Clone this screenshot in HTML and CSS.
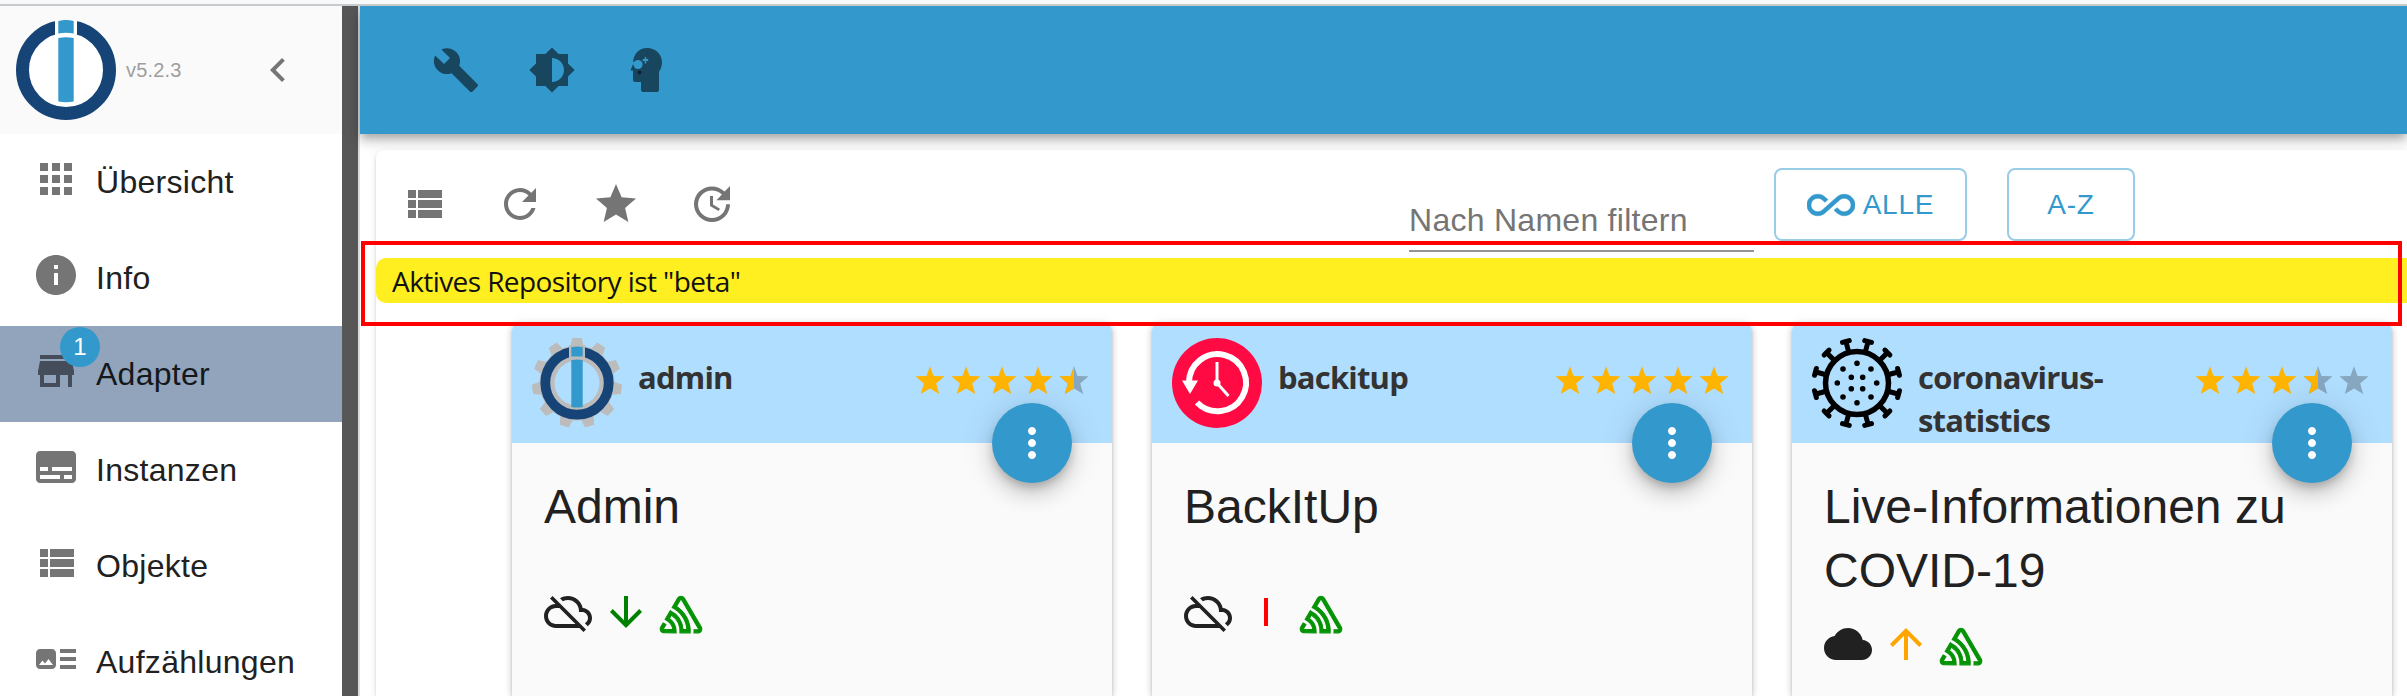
FILE: index.html
```html
<!DOCTYPE html>
<html lang="de"><head><meta charset="utf-8"><title>ioBroker Admin</title>
<link rel="stylesheet" href="styles.css"></head>
<body>
<svg class="defs" xmlns="http://www.w3.org/2000/svg">
<symbol id="star" viewBox="0 0 36 36"><path d="M18 4.200L21.500 13.900 32.500 14.300 24.200 21.500 27.200 32 18 26.600 8.800 32 11.800 21.500 3.500 14.300 14.500 13.900z"/></symbol>
<symbol id="dots" viewBox="0 0 24 24"><path d="M12 8c1.100 0 2-.9 2-2s-.9-2-2-2-2 .9-2 2 .9 2 2 2zm0 2c-1.100 0-2 .9-2 2s.9 2 2 2 2-.9 2-2-.9-2-2-2zm0 6c-1.100 0-2 .9-2 2s.9 2 2 2 2-.9 2-2-.9-2-2-2z"/></symbol>
<symbol id="cloudoff" viewBox="0 0 24 24"><path d="M19.350 10.040C18.670 6.590 15.640 4 12 4c-1.480 0-2.850.430-4.010 1.170l1.460 1.460C10.210 6.230 11.080 6 12 6c3.040 0 5.500 2.460 5.500 5.500v.5H19c1.660 0 3 1.340 3 3 0 1.130-.640 2.110-1.560 2.620l1.450 1.450C23.160 18.160 24 16.680 24 15c0-2.640-2.050-4.780-4.650-4.960zM3 5.270l2.750 2.740C2.560 8.150 0 10.770 0 14c0 3.310 2.690 6 6 6h11.730l2 2L21 20.730 4.270 4 3 5.270zM7.730 10l8 8H6c-2.210 0-4-1.790-4-4s1.790-4 4-4h1.730z"/></symbol>
<symbol id="sentry" viewBox="0 0 72 66"><path d="M29,2.260a4.670,4.670,0,0,0-8,0L14.420,13.530A32.210,32.210,0,0,1,32.170,40.190H27.550A27.680,27.680,0,0,0,12.090,17.470L6,28a15.920,15.920,0,0,1,9.230,12.170H4.620A.76.76,0,0,1,4,39.060l2.940-5a10.740,10.740,0,0,0-3.360-1.900l-2.910,5a4.540,4.540,0,0,0,1.690,6.240A4.660,4.660,0,0,0,4.620,44H19.150a19.400,19.400,0,0,0-8-17.310l2.310-4A23.870,23.870,0,0,1,23.760,44H36.070a35.880,35.880,0,0,0-16.410-31.800l4.670-8a.77.77,0,0,1,1.050-.27c.53.290,20.290,34.770,20.660,35.170a.76.76,0,0,1-.68,1.130H40.600q.09,1.910,0,3.810h4.780A4.590,4.590,0,0,0,50,39.430a4.490,4.490,0,0,0-.62-2.280Z" transform="translate(11 11)"/></symbol>
</svg>
<div class="strip"></div>
<div class="app">
<aside class="side">
 <div class="brand">
  <svg class="logo" viewBox="0 0 100 100"><circle cx="50" cy="50" r="50" fill="#fff"/><circle cx="50" cy="50" r="43.500" fill="none" stroke="#164477" stroke-width="13"/><path fill="#fff" d="M39 0h22v20H39zM42 80h16v6H42z"/><path fill="#39c" d="M42.300 1q7.700-2 15.400 0v12.500q-7.700-1.500-15.400 0zM42.300 18q7.700-1.500 15.400 0v63.500q-7.700 1.500-15.400 0z"/></svg>
  <span class="ver">v5.2.3</span>
  <svg class="i chev" viewBox="0 0 24 24"><path d="M15.410 7.410L14 6l-6 6 6 6 1.410-1.410L10.830 12z"/></svg>
 </div>
 <nav>
 <a class="row"><svg class="i" viewBox="0 0 24 24"><path d="M4 8h4V4H4zm6 12h4v-4h-4zm-6 0h4v-4H4zm0-6h4v-4H4zm6 0h4v-4h-4zm6-10v4h4V4zm-6 4h4V4h-4zm6 6h4v-4h-4zm0 6h4v-4h-4z"/></svg><span>Übersicht</span></a>
 <a class="row"><svg class="i" viewBox="0 0 24 24"><path d="M12 2C6.480 2 2 6.480 2 12s4.480 10 10 10 10-4.480 10-10S17.520 2 12 2zm1 15h-2v-6h2v6zm0-8h-2V7h2v2z"/></svg><span>Info</span></a>
 <a class="row active"><svg class="i" viewBox="0 0 24 24"><path d="M20 4H4v2h16V4zm1 10v-2l-1-5H4l-1 5v2h1v6h10v-6h4v6h2v-6h1zm-9 4H6v-4h6v4z"/></svg><b class="badge">1</b><span>Adapter</span></a>
 <a class="row"><svg class="i" viewBox="0 0 24 24"><path d="M20 4H4c-1.100 0-2 .9-2 2v12c0 1.100.9 2 2 2h16c1.100 0 2-.9 2-2V6c0-1.100-.9-2-2-2zM4 12h4v2H4v-2zm10 6H4v-2h10v2zm6 0h-4v-2h4v2zm0-4H10v-2h10v2z"/></svg><span>Instanzen</span></a>
 <a class="row"><svg class="i" viewBox="0 0 24 24"><path d="M4 14h4v-4H4v4zm0 5h4v-4H4v4zM4 9h4V5H4v4zm5 5h12v-4H9v4zm0 5h12v-4H9v4zM9 5v4h12V5H9z"/></svg><span>Objekte</span></a>
 <a class="row"><svg class="i" viewBox="0 0 24 24"><path d="M22 13h-8v-2h8v2zm0-6h-8v2h8V7zm-8 10h8v-2h-8v2zm-2-8v6c0 1.100-.9 2-2 2H4c-1.100 0-2-.9-2-2V9c0-1.100.9-2 2-2h6c1.100 0 2 .9 2 2zm-1.500 6l-2.250-3-1.750 2.260-1.250-1.510L3.500 15h7z"/></svg><span>Aufzählungen</span></a>
 </nav>
</aside>
<div class="divider"></div>
<main class="main">
 <header class="bar">
  <svg class="i" viewBox="0 0 24 24"><path d="M22.700 19l-9.100-9.100c.9-2.300.4-5-1.500-6.900-2-2-5-2.400-7.400-1.300L9 6 6 9 1.600 4.700C.4 7.100.9 10.100 2.900 12.100c1.900 1.900 4.600 2.400 6.900 1.500l9.100 9.100c.4.4 1 .4 1.400 0l2.300-2.300c.5-.4.5-1.100.1-1.400z"/></svg>
  <svg class="i" viewBox="0 0 24 24"><path d="M20 15.310L23.310 12 20 8.690V4h-4.690L12 .69 8.690 4H4v4.690L.69 12 4 15.310V20h4.690L12 23.310 15.310 20H20v-4.690zM12 18V6c3.310 0 6 2.690 6 6s-2.690 6-6 6z"/></svg>
  <svg class="i head" viewBox="0 0 48 48"><path d="M23 2c9 0 15 6.500 15 14.500 0 4-1.500 7-3 9.500V44q0 2-2 2H19q-2 0-2-2v-8h-6q-2 0-2-2V24.500H6.500L9 18C9 8 15 2 23 2z"/><circle cx="14" cy="18.500" r="4.600" fill="#39c"/><path fill="#39c" d="M20.700 11h1.500v2h2v2h-2v2.500h-1.500V15h-2v-2h2zM9 16l4 1v2l-5-.5z"/><circle cx="15.500" cy="26.500" r="2" fill="#0c2430"/></svg>
 </header>
 <section class="paper">
  <div class="tools">
   <svg class="i" viewBox="0 0 24 24"><path d="M4 14h4v-4H4v4zm0 5h4v-4H4v4zM4 9h4V5H4v4zm5 5h12v-4H9v4zm0 5h12v-4H9v4zM9 5v4h12V5H9z"/></svg>
   <svg class="i" viewBox="0 0 24 24"><path d="M17.650 6.350C16.200 4.900 14.210 4 12 4c-4.420 0-7.990 3.580-7.990 8s3.570 8 7.990 8c3.730 0 6.840-2.550 7.730-6h-2.080c-.82 2.330-3.040 4-5.650 4-3.310 0-6-2.690-6-6s2.690-6 6-6c1.660 0 3.140.69 4.220 1.780L13 11h7V4l-2.350 2.350z"/></svg>
   <svg class="i" viewBox="0 0 24 24"><path d="M12 17.270L18.180 21l-1.640-7.030L22 9.240l-7.190-.61L12 2 9.190 8.630 2 9.240l5.460 4.730L5.820 21z"/></svg>
   <svg class="i" viewBox="0 0 24 24"><path d="M21 10.120h-6.780l2.740-2.820c-2.730-2.700-7.150-2.800-9.880-.1-2.730 2.710-2.730 7.080 0 9.790s7.150 2.710 9.880 0C18.320 15.650 19 14.080 19 12.100h2c0 1.980-.88 4.550-2.640 6.290-3.510 3.480-9.210 3.480-12.720 0-3.500-3.470-3.530-9.110-.02-12.580s9.140-3.470 12.650 0L21 3v7.120zM12.500 8v4.250l3.500 2.080-.72 1.210L11 13V8h1.500z"/></svg>
   <div class="filter">Nach Namen filtern</div>
   <button class="btn all"><svg class="inf" viewBox="0 0 24 24"><path d="M18.600 6.620c-1.440 0-2.800.56-3.770 1.530L7.800 14.390c-.64.64-1.490.99-2.400.99-1.870 0-3.390-1.510-3.390-3.380S3.530 8.620 5.400 8.620c.91 0 1.760.35 2.440 1.030l1.130 1 1.510-1.340L9.220 8.200C8.200 7.180 6.840 6.620 5.400 6.620 2.420 6.620 0 9.040 0 12s2.420 5.380 5.400 5.380c1.440 0 2.800-.56 3.770-1.530l7.030-6.240c.64-.64 1.490-.99 2.400-.99 1.870 0 3.390 1.510 3.390 3.380s-1.520 3.380-3.390 3.380c-.9 0-1.760-.35-2.440-1.030l-1.140-1.010-1.510 1.340 1.270 1.120c1.020 1.010 2.370 1.570 3.820 1.570 2.980 0 5.400-2.410 5.400-5.380s-2.420-5.370-5.400-5.370z"/></svg>ALLE</button>
   <button class="btn az">A-Z</button>
  </div>
  <div class="notice">Aktives Repository ist "beta"</div>
  <div class="cards">
   <article class="card">
    <div class="top">
     <svg class="pic" viewBox="0 0 90 90"><g fill="#bcbcbc"><circle cx="45" cy="45" r="37.500"/><path id="tooth" d="M40.300 0h9.400l2 9h-13.400z"/><use href="#tooth" transform="rotate(32.727 45 45)"/><use href="#tooth" transform="rotate(65.455 45 45)"/><use href="#tooth" transform="rotate(98.182 45 45)"/><use href="#tooth" transform="rotate(130.909 45 45)"/><use href="#tooth" transform="rotate(163.636 45 45)"/><use href="#tooth" transform="rotate(196.364 45 45)"/><use href="#tooth" transform="rotate(229.091 45 45)"/><use href="#tooth" transform="rotate(261.818 45 45)"/><use href="#tooth" transform="rotate(294.545 45 45)"/><use href="#tooth" transform="rotate(327.273 45 45)"/></g><circle cx="45" cy="45" r="22.500" fill="#b0deff"/><circle cx="45" cy="45" r="31.700" fill="none" stroke="#164477" stroke-width="9.800"/><path fill="#bcbcbc" d="M37 7h16v14H37z"/><path fill="#39c" d="M39.300 9q5.700-1 11.400 0v9.500H39.300zM39.300 22q5.700-1 11.400 0v47q-5.700 1-11.400 0z"/></svg>
     <h3>admin</h3>
     <div class="stars"><svg><use href="#star"/></svg><svg><use href="#star"/></svg><svg><use href="#star"/></svg><svg><use href="#star"/></svg><svg class="off half"><use href="#star"/><use href="#star"/></svg></div>
    </div>
    <div class="fab"><svg class="i"><use href="#dots"/></svg></div>
    <h2>Admin</h2>
    <div class="state"><svg class="c"><use href="#cloudoff"/></svg><svg class="a green" viewBox="0 0 32 32"><path d="M14 0h4v24.300l11.200-11.200L32 16 16 32 0 16l2.800-2.900L14 24.300z"/></svg><svg class="s"><use href="#sentry"/></svg></div>
   </article>
   <article class="card">
    <div class="top">
     <svg class="pic" viewBox="0 0 90 90"><circle cx="45" cy="45" r="45" fill="#ff0a43"/><path d="M17 45A28.500 28.500 0 1 1 25 64.500" fill="none" stroke="#fff" stroke-width="6"/><path fill="#fff" d="M10 42.500h16L18 56z"/><path d="M45 24v21l11.500 13" fill="none" stroke="#fff" stroke-width="3"/><circle cx="45" cy="45" r="3.500" fill="#fff"/></svg>
     <h3>backitup</h3>
     <div class="stars"><svg><use href="#star"/></svg><svg><use href="#star"/></svg><svg><use href="#star"/></svg><svg><use href="#star"/></svg><svg><use href="#star"/></svg></div>
    </div>
    <div class="fab"><svg class="i"><use href="#dots"/></svg></div>
    <h2>BackItUp</h2>
    <div class="state"><svg class="c"><use href="#cloudoff"/></svg><svg class="a red" viewBox="0 0 32 32"><path d="M14 2h4v28h-4z"/></svg><svg class="s"><use href="#sentry"/></svg></div>
   </article>
   <article class="card">
    <div class="top">
     <svg class="pic" viewBox="0 0 90 90"><circle cx="45" cy="45" r="31.500" fill="none" stroke="#000" stroke-width="5.500"/><g fill="none" stroke="#000" stroke-width="5" stroke-linecap="round"><path id="spike" transform="rotate(15 45 45)" d="M45 13V3.500M41.500 2h7"/><use href="#spike" transform="rotate(30 45 45)"/><use href="#spike" transform="rotate(60 45 45)"/><use href="#spike" transform="rotate(90 45 45)"/><use href="#spike" transform="rotate(120 45 45)"/><use href="#spike" transform="rotate(150 45 45)"/><use href="#spike" transform="rotate(180 45 45)"/><use href="#spike" transform="rotate(210 45 45)"/><use href="#spike" transform="rotate(240 45 45)"/><use href="#spike" transform="rotate(270 45 45)"/><use href="#spike" transform="rotate(300 45 45)"/><use href="#spike" transform="rotate(330 45 45)"/></g><path stroke="#000" stroke-width="5.600" stroke-linecap="round" d="M45 25.300h0M45 64.700h0M25.300 45h0M64.700 45h0M31 31h0M59 31h0M31 59h0M59 59h0M39.300 39.300h0M50.700 39.300h0M39.300 50.700h0M50.700 50.700h0"/></svg>
     <h3>coronavirus-<br>statistics</h3>
     <div class="stars"><svg><use href="#star"/></svg><svg><use href="#star"/></svg><svg><use href="#star"/></svg><svg class="off half"><use href="#star"/><use href="#star"/></svg><svg class="off"><use href="#star"/></svg></div>
    </div>
    <div class="fab"><svg class="i"><use href="#dots"/></svg></div>
    <h2>Live-Informationen zu COVID-19</h2>
    <div class="state near"><svg class="c" viewBox="0 0 24 24"><path d="M19.350 10.040C18.670 6.590 15.640 4 12 4 9.110 4 6.600 5.640 5.350 8.040 2.340 8.360 0 10.910 0 14c0 3.310 2.690 6 6 6h13c2.760 0 5-2.240 5-5 0-2.640-2.050-4.780-4.650-4.960z"/></svg><svg class="a orange" viewBox="0 0 32 32"><path d="M14 32h4V7.700l11.200 11.200L32 16 16 0 0 16l2.800 2.900L14 7.700z"/></svg><svg class="s"><use href="#sentry"/></svg></div>
   </article>
  </div>
 </section>
</main>
</div>
<div class="mark"></div>
</body></html>
```

FILE: styles.css
```css
* { box-sizing: border-box; }
html, body { margin: 0; height: 100%; overflow: hidden; }
body { background: #fff; font-family: "Liberation Sans", Arial, sans-serif; color: #212121; }
.defs { position: absolute; width: 0; height: 0; }
.strip { height: 6px; background: #f8f9fa; border-bottom: 2px solid #c9cacc; }
.app { display: flex; height: 690px; overflow: hidden; }
.i { width: 48px; height: 48px; flex: none; fill: #757575; display: block; }
.side { width: 342px; flex: none; }
.brand { height: 128px; background: #fafafa; display: flex; align-items: center; padding-left: 16px; }
.logo { width: 100px; height: 100px; }
.ver { font-size: 20px; letter-spacing: .2px; color: #9e9e9e; margin-left: 10px; width: 128px; }
.row { display: flex; height: 96px; padding: 21px 0 0 32px; position: relative; font-size: 32px; letter-spacing: .28px; line-height: 54px; }
.row:last-child { height: 82px; }
.row span { margin-left: 16px; }
.active { background: #91a4bb; color: #14181c; }
.active .i { fill: #444d59; }
.badge { position: absolute; left: 60px; top: 1px; width: 40px; height: 40px; border-radius: 50%; background: #39c; color: #fff; font-size: 24px; line-height: 40px; font-weight: 400; text-align: center; }
.divider { width: 18px; flex: none; background: #575757; border-right: 2px solid #ddd; }
.main { flex: 1; min-width: 0; background: #fff; }
.bar { height: 128px; background: #39c; display: flex; align-items: center; gap: 48px; padding-left: 72px; box-shadow: 0 4px 8px -2px rgba(0,0,0,.2), 0 8px 10px rgba(0,0,0,.14), 0 2px 20px rgba(0,0,0,.12); }
.bar .i { fill: #18465e; }
.paper { position: relative; margin: 16px 0 0 16px; height: 546px; background: #fff; border-radius: 8px 0 0 0; box-shadow: 0 4px 2px -2px rgba(0,0,0,.2), 0 2px 2px rgba(0,0,0,.14), 0 2px 6px rgba(0,0,0,.12); }
.tools { height: 108px; display: flex; gap: 48px; padding: 18px 0 0 24px; }
.tools > .i { margin-top: 12px; }
.filter { width: 345px; height: 84px; margin-left: 625px; border-bottom: 2px solid #949494; font-size: 32px; letter-spacing: .27px; line-height: 36px; padding-top: 34px; color: #757575; }
.btn { height: 73px; flex: none; border: 2px solid #99cce5; border-radius: 8px; background: #fff; color: #39c; font: 28px "Liberation Sans", Arial, sans-serif; letter-spacing: .8px; padding: 0; display: flex; align-items: center; justify-content: center; }
.all { width: 193px; margin-left: -28px; }
.az { width: 128px; margin-left: -8px; }
.inf { width: 48px; height: 48px; margin-right: 8px; fill: #39c; stroke: #39c; stroke-width: .3px; }
.notice { height: 45px; background: #ffee20; border-radius: 10px 0 0 10px; padding: 1px 0 0 16px; font: 28px/45px "Open Sans", "Noto Sans", sans-serif; letter-spacing: -.58px; color: #111; }
.cards { display: flex; gap: 40px; padding: 20px 0 0 136px; }
.card { position: relative; width: 600px; height: 373px; flex: none; background: #fafafa; border-radius: 8px 8px 0 0; box-shadow: 0 2px 2px rgba(0,0,0,.14), 0 2px 6px rgba(0,0,0,.2), 0 0 12px rgba(0,0,0,.08); }
.top { height: 120px; background: #b0deff; border-radius: 8px 8px 0 0; display: flex; padding: 15px 20px 0 20px; }
.pic { width: 90px; height: 90px; overflow: visible; flex: none; }
h3 { margin: 18px 0 0 16px; flex: 1; font: bold 31px/43px "Open Sans", "Noto Sans", sans-serif; letter-spacing: -.8px; color: #333; }
.stars { display: flex; margin-top: 24px; height: 36px; }
.stars svg { width: 36px; height: 36px; fill: #ffb400; }
.stars .off { fill: #87a6bf; }
.half use:last-child { fill: #ffb400; clip-path: polygon(0 0, 18px 0, 18px 36px, 0 36px); }
.half use:last-child { clip-path: inset(0 50% 0 0); }
.fab { position: absolute; left: 480px; top: 80px; width: 80px; height: 80px; border-radius: 50%; background: #39c; padding: 16px; box-shadow: 0 6px 10px -2px rgba(0,0,0,.2), 0 12px 20px rgba(0,0,0,.14), 0 2px 36px rgba(0,0,0,.12); }
.fab .i { fill: #fff; }
h2 { margin: 32px 32px 0; font-size: 48px; line-height: 64px; font-weight: 400; }
.state { display: flex; margin: 49px 0 0 32px; }
.near { margin-top: 17px; }
.c { width: 48px; height: 48px; fill: #212121; }
.a { width: 32px; height: 32px; margin: 8px 9px 0 18px; }
.s { width: 60px; height: 55px; margin-top: -1px; fill: #069306; stroke: #069306; stroke-width: 1.3px; }
.green { fill: #008000; } .red { fill: red; } .orange { fill: orange; }
.mark { position: absolute; left: 361px; top: 241px; width: 2041px; height: 85px; border: 4px solid red; }
```
